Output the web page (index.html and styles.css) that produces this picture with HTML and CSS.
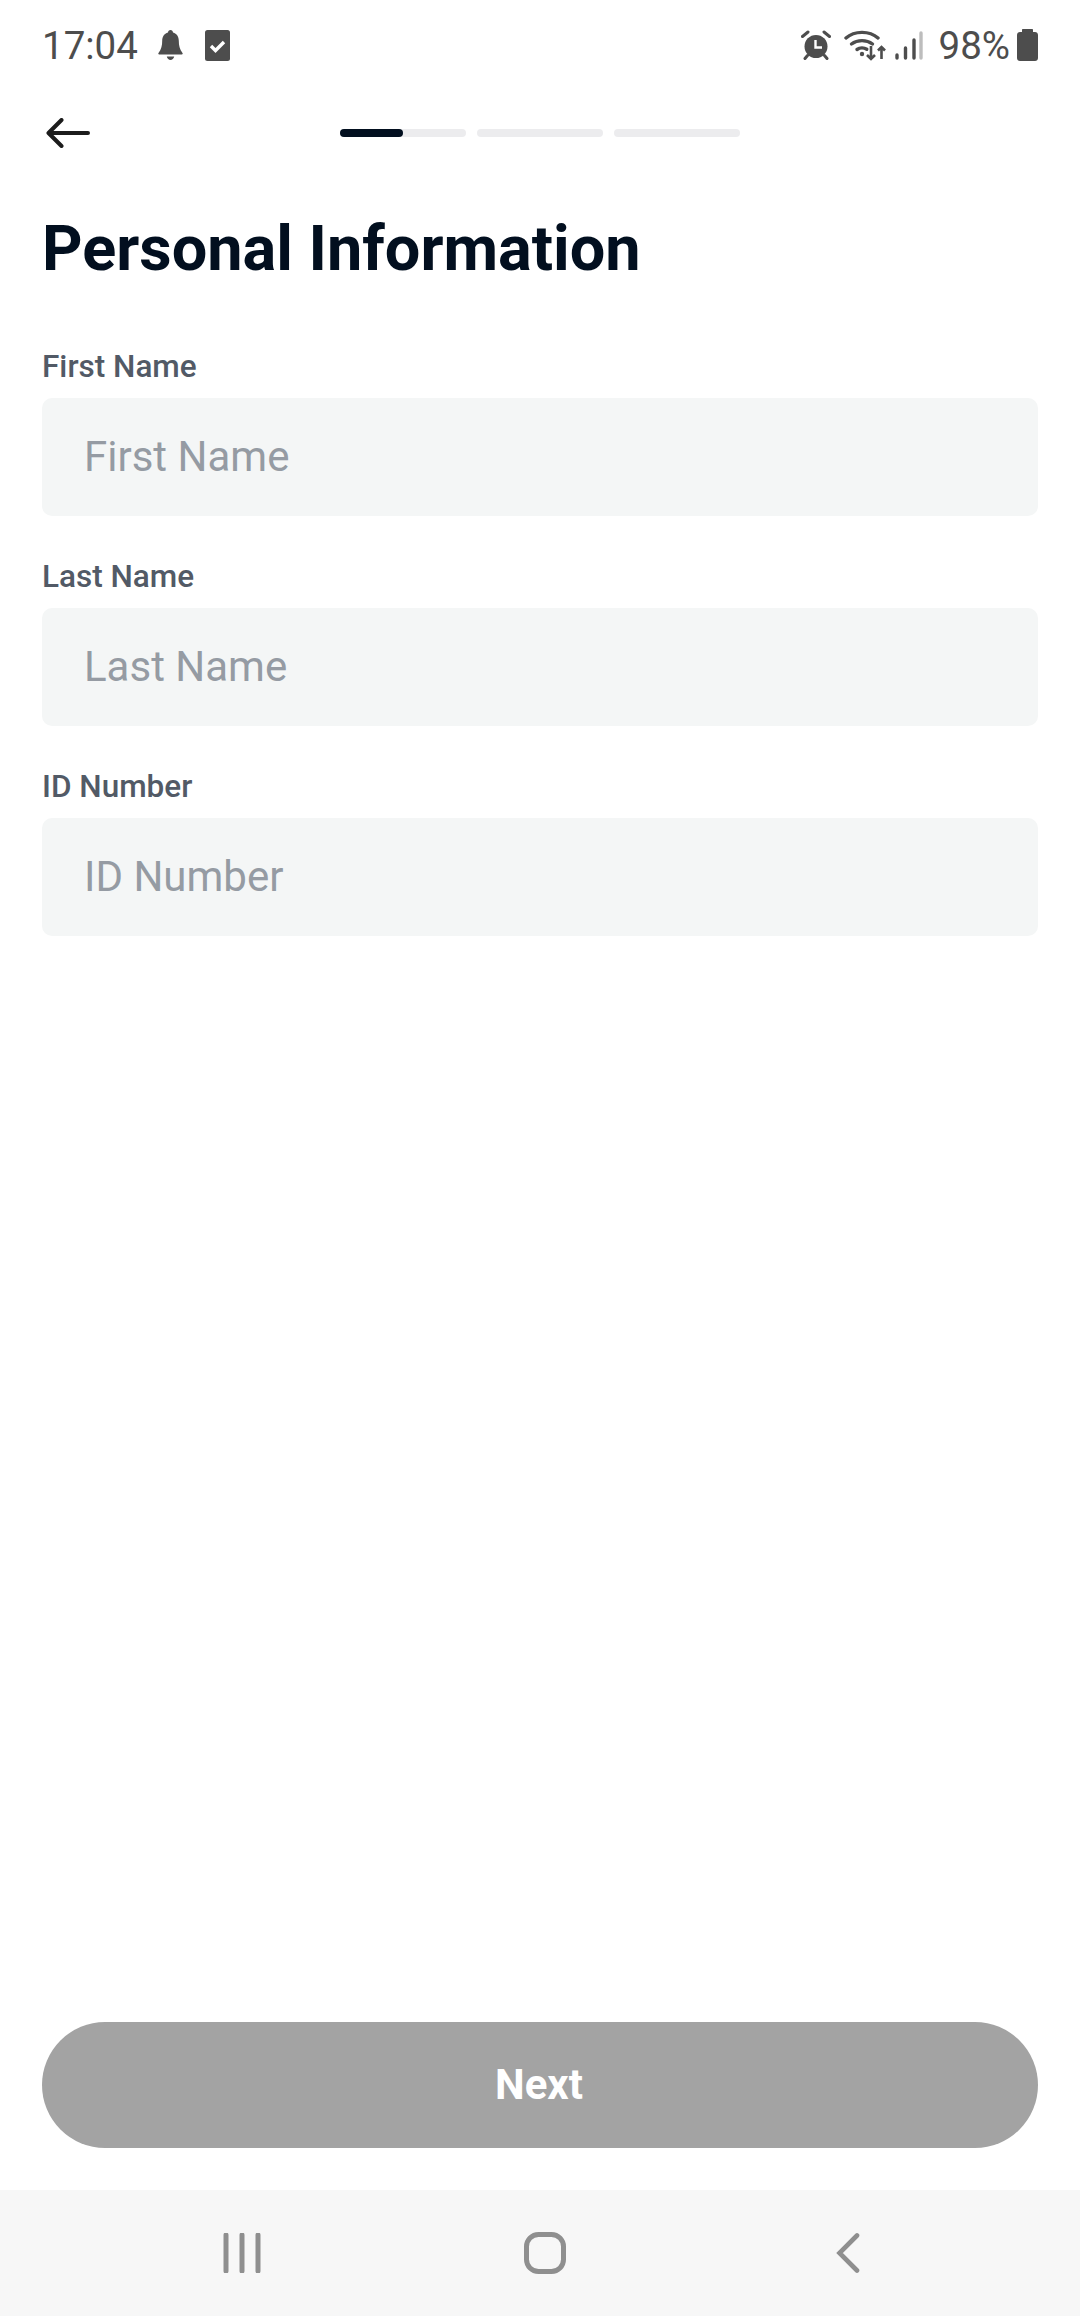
FILE: index.html
```html
<!DOCTYPE html>
<html lang="en">
<head>
    <meta charset="UTF-8">
    <meta name="viewport" content="width=device-width, initial-scale=1.0">
    <title>Personal Information</title>
    <link rel="stylesheet" href="styles.css">
</head>
<body>
    <div class="phone">
        <div class="status-bar">
            <div class="status-left">
                <span class="clock">17:04</span>
                <svg class="icon-bell" viewBox="0 0 25 30"><path fill="#4d4d4d" d="M12.5 0c1.500 0 2.400 1 2.500 2.400 3.900 1.100 5.800 4.300 5.800 8.400 0 4.700.9 8.800 3.700 12.200.5.700.1 1.400-.7 1.400H1.200c-.8 0-1.200-.7-.7-1.400 2.800-3.400 3.700-7.500 3.700-12.200 0-4.100 1.900-7.300 5.800-8.400C10.100 1 11 0 12.500 0zM8.800 26.500h7.400c-.5 2.100-2 3.500-3.700 3.500s-3.200-1.400-3.700-3.500z"/></svg>
                <svg class="icon-check" viewBox="0 0 25 31"><rect width="25" height="31" rx="2.500" fill="#4d4d4d"/><path d="M6 16l4.500 4.500L19 12" fill="none" stroke="#fff" stroke-width="3.400"/></svg>
            </div>
            <div class="status-right">
                <svg class="icon-alarm" viewBox="0 0 30 30"><circle cx="15" cy="16.500" r="11.500" fill="#4d4d4d"/><path d="M1.500 6.500L7 2M28.500 6.500L23 2M6.500 25.500L4 28.500M23.500 25.500L26 28.500" stroke="#4d4d4d" stroke-width="3" stroke-linecap="round"/><path d="M14.500 10v7.500H21" fill="none" stroke="#fff" stroke-width="2.400"/></svg>
                <svg class="icon-wifi" viewBox="0 0 42 31"><g fill="none" stroke="#4d4d4d" stroke-width="3.400" stroke-linecap="round"><path d="M2 8C10.500.500 25.500.500 34 8"/><path d="M7.500 14c6-4.500 15-4.500 21 0"/><path d="M13 19.500c2.800-2 7-2 9.800-.2"/></g><circle cx="18" cy="24" r="2.200" fill="#4d4d4d"/><path d="M27 16v13m-4-4l4 4 4-4M37.500 29V17m-3.500 3.500l3.500-3.500 3.500 3.500" fill="none" stroke="#4d4d4d" stroke-width="2.600"/></svg>
                <svg class="icon-signal" viewBox="0 0 28 29"><g stroke-width="3.400" stroke-linecap="round"><path d="M2 27v-3M10.500 27V17M19 27V9" stroke="#4d4d4d"/><path d="M26 27V2" stroke="#bdbdbd"/></g></svg>
                <span class="battery-text">98%</span>
                <svg class="icon-battery" viewBox="0 0 21 32"><path fill="#4d4d4d" d="M6 0h9c.6 0 1 .4 1 1v2h2c1.700 0 3 1.300 3 3v23c0 1.700-1.300 3-3 3H3c-1.700 0-3-1.300-3-3V6c0-1.700 1.300-3 3-3h2V1c0-.6.400-1 1-1z"/></svg>
            </div>
        </div>

        <div class="toolbar">
            <svg class="back-arrow" viewBox="0 0 44 30"><path d="M42 15H3M15.500 2L2.500 15l13 13" fill="none" stroke="#1c1c1c" stroke-width="4" stroke-linecap="round" stroke-linejoin="round"/></svg>
            <div class="steps">
                <div class="step"><div class="step-fill"></div></div>
                <div class="step"></div>
                <div class="step"></div>
            </div>
        </div>

        <div class="content">
            <h1 class="page-title">Personal Information</h1>

            <div class="field">
                <label class="field-label" for="firstName">First Name</label>
                <input class="field-input" type="text" id="firstName" placeholder="First Name">
            </div>
            <div class="field">
                <label class="field-label" for="lastName">Last Name</label>
                <input class="field-input" type="text" id="lastName" placeholder="Last Name">
            </div>
            <div class="field">
                <label class="field-label" for="idNumber">ID Number</label>
                <input class="field-input" type="text" id="idNumber" placeholder="ID Number">
            </div>
        </div>

        <div class="actions">
            <button class="next-button" disabled>Next</button>
        </div>

        <div class="nav-bar">
            <svg class="nav-recents" viewBox="0 0 38 40"><path d="M3 2v36M19 2v36M35 2v36" stroke="#8f8f8f" stroke-width="5" stroke-linecap="round"/></svg>
            <svg class="nav-home" viewBox="0 0 42 42"><rect x="2.500" y="2.500" width="37" height="37" rx="12" fill="none" stroke="#8f8f8f" stroke-width="5"/></svg>
            <svg class="nav-back" viewBox="0 0 24 40"><path d="M21 2.500L3.500 20 21 37.500" fill="none" stroke="#8f8f8f" stroke-width="4.600" stroke-linecap="round" stroke-linejoin="miter"/></svg>
        </div>
    </div>
</body>
</html>
```

FILE: styles.css
```css
body {
    margin: 0;
    padding: 0;
    background-color: #fff;
    font-family: Roboto, sans-serif;
}

.phone {
    display: flex;
    flex-direction: column;
    height: 2316px;
    overflow: hidden;
}

.status-bar {
    display: flex;
    justify-content: space-between;
    align-items: center;
    height: 90px;
    padding: 0 42px;
    color: #4d4d4d;
}

.status-left, .status-right {
    display: flex;
    align-items: center;
}

.clock {
    padding-top: 2px;
    font-size: 38.5px;
    line-height: 44px;
}

.icon-bell {
    width: 25px;
    height: 30px;
    margin-left: 20px;
}

.icon-check {
    width: 25px;
    height: 31px;
    margin-left: 22px;
}

.icon-alarm {
    width: 30px;
    height: 30px;
}

.icon-wifi {
    width: 42px;
    height: 31px;
    margin-left: 13px;
}

.icon-signal {
    width: 28px;
    height: 29px;
    margin-left: 9px;
}

.battery-text {
    margin-left: 16px;
    padding-top: 2px;
    font-size: 38.5px;
    line-height: 44px;
}

.icon-battery {
    width: 21px;
    height: 32px;
    margin-left: 7px;
}

.toolbar {
    display: grid;
    grid-template-columns: 1fr auto 1fr;
    align-items: center;
    height: 86px;
    padding: 0 42px 0 46px;
}

.back-arrow {
    width: 44px;
    height: 30px;
}

.steps {
    display: flex;
    gap: 11px;
    margin-left: -4px;
}

.step {
    width: 126px;
    height: 8px;
    border-radius: 4px;
    background: #ececee;
}

.step-fill {
    width: 63px;
    height: 8px;
    border-radius: 4px;
    background: #020f1f;
}

.content {
    flex: 1;
    padding: 37px 42px 0;
}

.page-title {
    margin: 0 0 62px;
    font-size: 63px;
    line-height: 72px;
    font-weight: 700;
    color: #020f1f;
}

.field {
    margin-bottom: 41px;
}

.field-label {
    display: block;
    margin-bottom: 11px;
    font-size: 31.5px;
    line-height: 40px;
    font-weight: 500;
    color: #525a66;
}

.field-input {
    display: block;
    box-sizing: border-box;
    width: 100%;
    height: 118px;
    padding: 0 42px 2px;
    border: none;
    border-radius: 10px;
    background: #f4f6f6;
    font-family: Roboto, sans-serif;
    font-size: 42px;
    color: #020f1f;
}

.field-input::placeholder {
    color: #959ba3;
    opacity: 1;
}

.actions {
    padding: 0 42px 42px;
}

.next-button {
    display: block;
    width: 100%;
    height: 126px;
    padding: 0 2px 2px 0;
    border: none;
    border-radius: 63px;
    background: #a3a3a3;
    color: #fff;
    font-family: Roboto, sans-serif;
    font-size: 42px;
    font-weight: 700;
}

.nav-bar {
    display: flex;
    align-items: center;
    height: 126px;
    background: #f7f7f7;
}

.nav-recents {
    width: 38px;
    height: 40px;
    margin-left: 223px;
}

.nav-home {
    width: 42px;
    height: 42px;
    margin-left: 263px;
}

.nav-back {
    width: 24px;
    height: 40px;
    margin-left: 270px;
}
```
